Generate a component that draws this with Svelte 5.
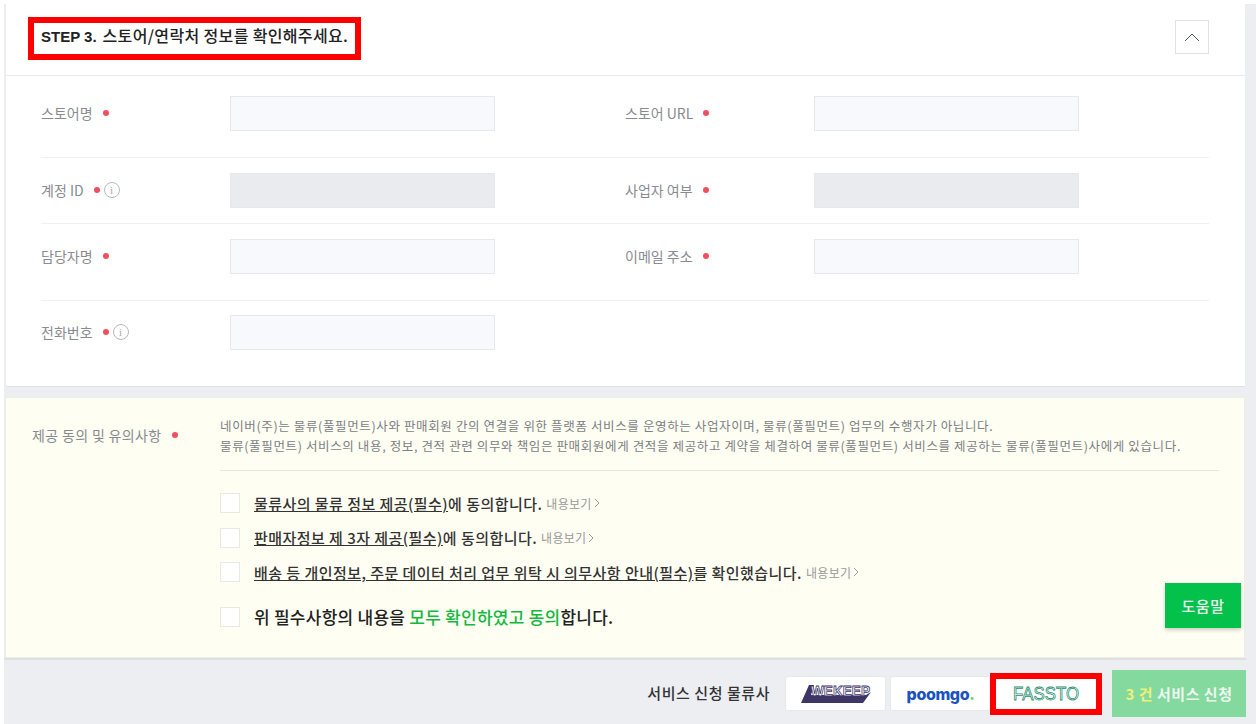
<script>
  const rows = [
    [{ l: '스토어명' }, { l: '스토어 URL' }],
    [{ l: '계정 ID', info: true, off: true }, { l: '사업자 여부', off: true }],
    [{ l: '담당자명' }, { l: '이메일 주소' }],
    [{ l: '전화번호', info: true }]
  ];
  const checks = [
    { u: '물류사의 물류 정보 제공(필수)', t: '에 동의합니다.' },
    { u: '판매자정보 제 3자 제공(필수)', t: '에 동의합니다.' },
    { u: '배송 등 개인정보, 주문 데이터 처리 업무 위탁 시 의무사항 안내(필수)', t: '를 확인했습니다.' }
  ];
</script>

<div class="page">
  <section class="card">
    <header class="head">
      <h2 class="title"><b>STEP 3.</b> 스토어/연락처 정보를 확인해주세요.</h2>
      <button class="toggle" aria-label="접기">
        <svg width="16" height="9" viewBox="0 0 16 9"><path d="M1 8L8 1l7 7" fill="none" stroke="#555b66" stroke-width="1"/></svg>
      </button>
    </header>
    <div class="form">
      {#each rows as row, i}
        <div class="row r{i}">
          {#each row as f}
            <div class="field">
              <div class="label">
                <span>{f.l}</span><i class="dot"></i>
                {#if f.info}<span class="info">i</span>{/if}
              </div>
              <div class="input" class:off={f.off}></div>
            </div>
          {/each}
        </div>
      {/each}
    </div>
  </section>

  <section class="agree">
    <div class="agree-label">제공 동의 및 유의사항<i class="dot"></i></div>
    <div class="agree-body">
      <p class="notice">네이버(주)는 물류(풀필먼트)사와 판매회원 간의 연결을 위한 플랫폼 서비스를 운영하는 사업자이며, 물류(풀필먼트) 업무의 수행자가 아닙니다.<br />물류(풀필먼트) 서비스의 내용, 정보, 견적 관련 의무와 책임은 판매회원에게 견적을 제공하고 계약을 체결하여 물류(풀필먼트) 서비스를 제공하는 물류(풀필먼트)사에게 있습니다.</p>
      <div class="checks">
        {#each checks as c}
          <div class="check"><i class="box"></i><span><u>{c.u}</u>{c.t}</span><em>내용보기<svg width="6" height="10" viewBox="0 0 6 10"><path d="M1 1l4 4-4 4" fill="none" stroke="#999" /></svg></em></div>
        {/each}
        <div class="check all"><i class="box"></i><span>위 필수사항의 내용을 <b>모두 확인하였고 동의</b>합니다.</span></div>
      </div>
    </div>
  </section>

  <footer class="bar">
    <span class="bar-label">서비스 신청 물류사</span>
    <div class="logo">
      <svg width="70" height="20" viewBox="0 0 70 20">
        <path d="M8 1h5L10 11h55l5-3-8 11H0z" fill="#3d3566"/>
        <text x="10" y="12" textLength="59" lengthAdjust="spacingAndGlyphs" class="wk">WEKEEP</text>
      </svg>
    </div>
    <div class="logo"><span class="poomgo">poomgo<span>.</span></span></div>
    <div class="logo marked">
      <svg width="96" height="24" viewBox="0 0 96 24">
        <text x="15" y="18" textLength="66" lengthAdjust="spacingAndGlyphs" class="fs">FASSTO</text>
      </svg>
    </div>
    <button class="apply"><span>3 건</span> 서비스 신청</button>
  </footer>

  <button class="help">도움말</button>
</div>

<style>
  :global(body) { margin: 0; background: #fff; }
  .page {
    width: 1256px; height: 724px; overflow: hidden; position: relative;
    box-sizing: border-box; margin: 0;
    font-family: "Noto Sans CJK KR", "Liberation Sans", sans-serif;
    background:
      linear-gradient(#fff, #fff) no-repeat 0 0 / 100% 4px,
      linear-gradient(#fff, #fff) no-repeat 0 0 / 4px 100%,
      #eceef2;
    color: #222;
    padding-left: 5px; padding-right: 11px;
  }
  .card { background: #fff; height: 387px; box-sizing: border-box; border-bottom: 1px solid #dfe2e7; margin-left: 1px; }
  .head {
    height: 76px; box-sizing: border-box; border-bottom: 1px solid #e8eaed;
    display: flex; align-items: flex-start; justify-content: space-between;
    padding: 17px 36px 0 22px;
  }
  .title {
    margin: 0; height: 43px; width: 333px; box-sizing: border-box;
    border: 6px solid #f00; padding-left: 7px; font-size: 16px; font-weight: 500;
    line-height: 25px; white-space: nowrap; color: #222; letter-spacing: 0.35px;
  }
  .title b { font-family: "Liberation Sans", sans-serif; font-weight: 700; font-size: 15px; letter-spacing: 0; margin-right: 2px; }
  .toggle {
    width: 34px; height: 34px; background: #fff; border: 1px solid #e0e2e6; padding: 0;
    display: flex; align-items: center; justify-content: center; margin-top: 3px;
  }
  .form { padding: 0 36px 0 35px; }
  .row { display: flex; border-bottom: 1px solid #eff0f2; box-sizing: border-box; }
  .r0 { height: 82px; padding-top: 20px; }
  .r1 { height: 66px; padding-top: 15px; }
  .r2 { height: 77px; padding-top: 15px; }
  .r3 { height: 80px; padding-top: 14px; border-bottom: 0; }
  .field { display: flex; width: 584px; }
  .label {
    width: 189px; height: 35px; display: flex; align-items: center; font-size: 14px;
    color: #888b91; padding-bottom: 1px; box-sizing: border-box;
  }
  .dot { width: 6px; height: 6px; border-radius: 50%; background: #f0505e; margin-left: 10px; display: block; }
  .info {
    width: 14px; height: 14px; border: 1px solid #b5b8bd; border-radius: 50%; color: #aaa;
    font: 11px/14px "Liberation Serif", serif; text-align: center; margin-left: 4px;
  }
  .input { width: 265px; height: 35px; box-sizing: border-box; background: #f7f9fc; border: 1px solid #e6e8ec; }
  .input.off { background: #e9ebee; }
  .agree {
    margin-top: 10px; height: 261px; background: #fefef2; box-sizing: border-box;
    border: 1px solid #eceee2; display: flex; padding: 17px 25px 0 26px;
  }
  .agree-label {
    width: 188px; flex: none; font-size: 14px; color: #888b91; height: 40px; display: flex; align-items: flex-start; line-height: 40px; white-space: nowrap; letter-spacing: 0.35px;
  }
  .agree-label .dot { margin-top: 17px; }
  .agree-body { flex: 1; }
  .notice {
    margin: 0; font-size: 12.5px; line-height: 20px; color: #7c7f85; padding-top: 1px; padding-bottom: 14px;
    border-bottom: 1px solid #e7e8dc; white-space: nowrap; letter-spacing: 0.63px;
  }
  .checks { padding-top: 15px; }
  .check { display: flex; align-items: center; height: 34.5px; font-size: 15px; letter-spacing: 0.45px; font-weight: 500; color: #333; white-space: nowrap; }
  .check.all { height: 40px; margin-top: 7px; font-size: 17px; letter-spacing: 0.25px; color: #222; }
  .check b { color: #14b83f; font-weight: 500; }
  .box { width: 20px; height: 20px; box-sizing: border-box; background: #fff; border: 1px solid #e8e9e2; margin-right: 14px; flex: none; }
  .check em { font-style: normal; font-weight: 400; font-size: 12px; color: #999; margin-left: 4px; letter-spacing: 0.3px; display: flex; align-items: center; gap: 2px; }
  .bar { position: absolute; left: 4px; right: 10px; top: 658px; height: 66px; border-top: 2px solid #dfe1e5; box-sizing: border-box; display: flex; align-items: center; justify-content: flex-end; padding-top: 3px; background: #eceef2; }
  .bar-label { font-size: 15px; letter-spacing: 0.55px; font-weight: 500; color: #333; margin-right: 15px; padding-bottom: 2px; }
  .logo {
    width: 101px; height: 35px; background: #fff; border: 1px solid #e6e8ea; border-radius: 3px; box-sizing: border-box;
    display: flex; align-items: center; justify-content: center; margin-right: 4px; flex: none;
  }
  .wk { font: 700 14px "Liberation Sans", sans-serif; fill: #fff; stroke: #3d3566; stroke-width: 0.8; }
  .fs { font: 400 18px "Liberation Sans", sans-serif; fill: #fff; stroke: #1f8f70; stroke-width: 0.8; }
  .poomgo { font: 800 16px "Inter", sans-serif; color: #1a53c0; letter-spacing: -0.4px; }
  .poomgo span { color: #7ecb60; }
  .marked { border: 6px solid #f00; border-radius: 0; width: 112px; height: 42px; margin: 0 10px 0 -5px; position: relative; }
  .apply {
    width: 134px; height: 47px; border: 0; background: #84d99e; color: #eef8f0; font: 700 15px "Noto Sans CJK KR", sans-serif; letter-spacing: 0.5px; flex: none;
  }
  .apply span { color: #eef07a; }
  .help {
    position: absolute; left: 1165px; top: 583px; width: 76px; height: 45px; border: 0; background: #04c14c;
    color: #e8f8ee; font: 500 15px "Noto Sans CJK KR", sans-serif; letter-spacing: 0.5px; box-shadow: 0 2px 4px rgba(0,0,0,.2);
  }
</style>
